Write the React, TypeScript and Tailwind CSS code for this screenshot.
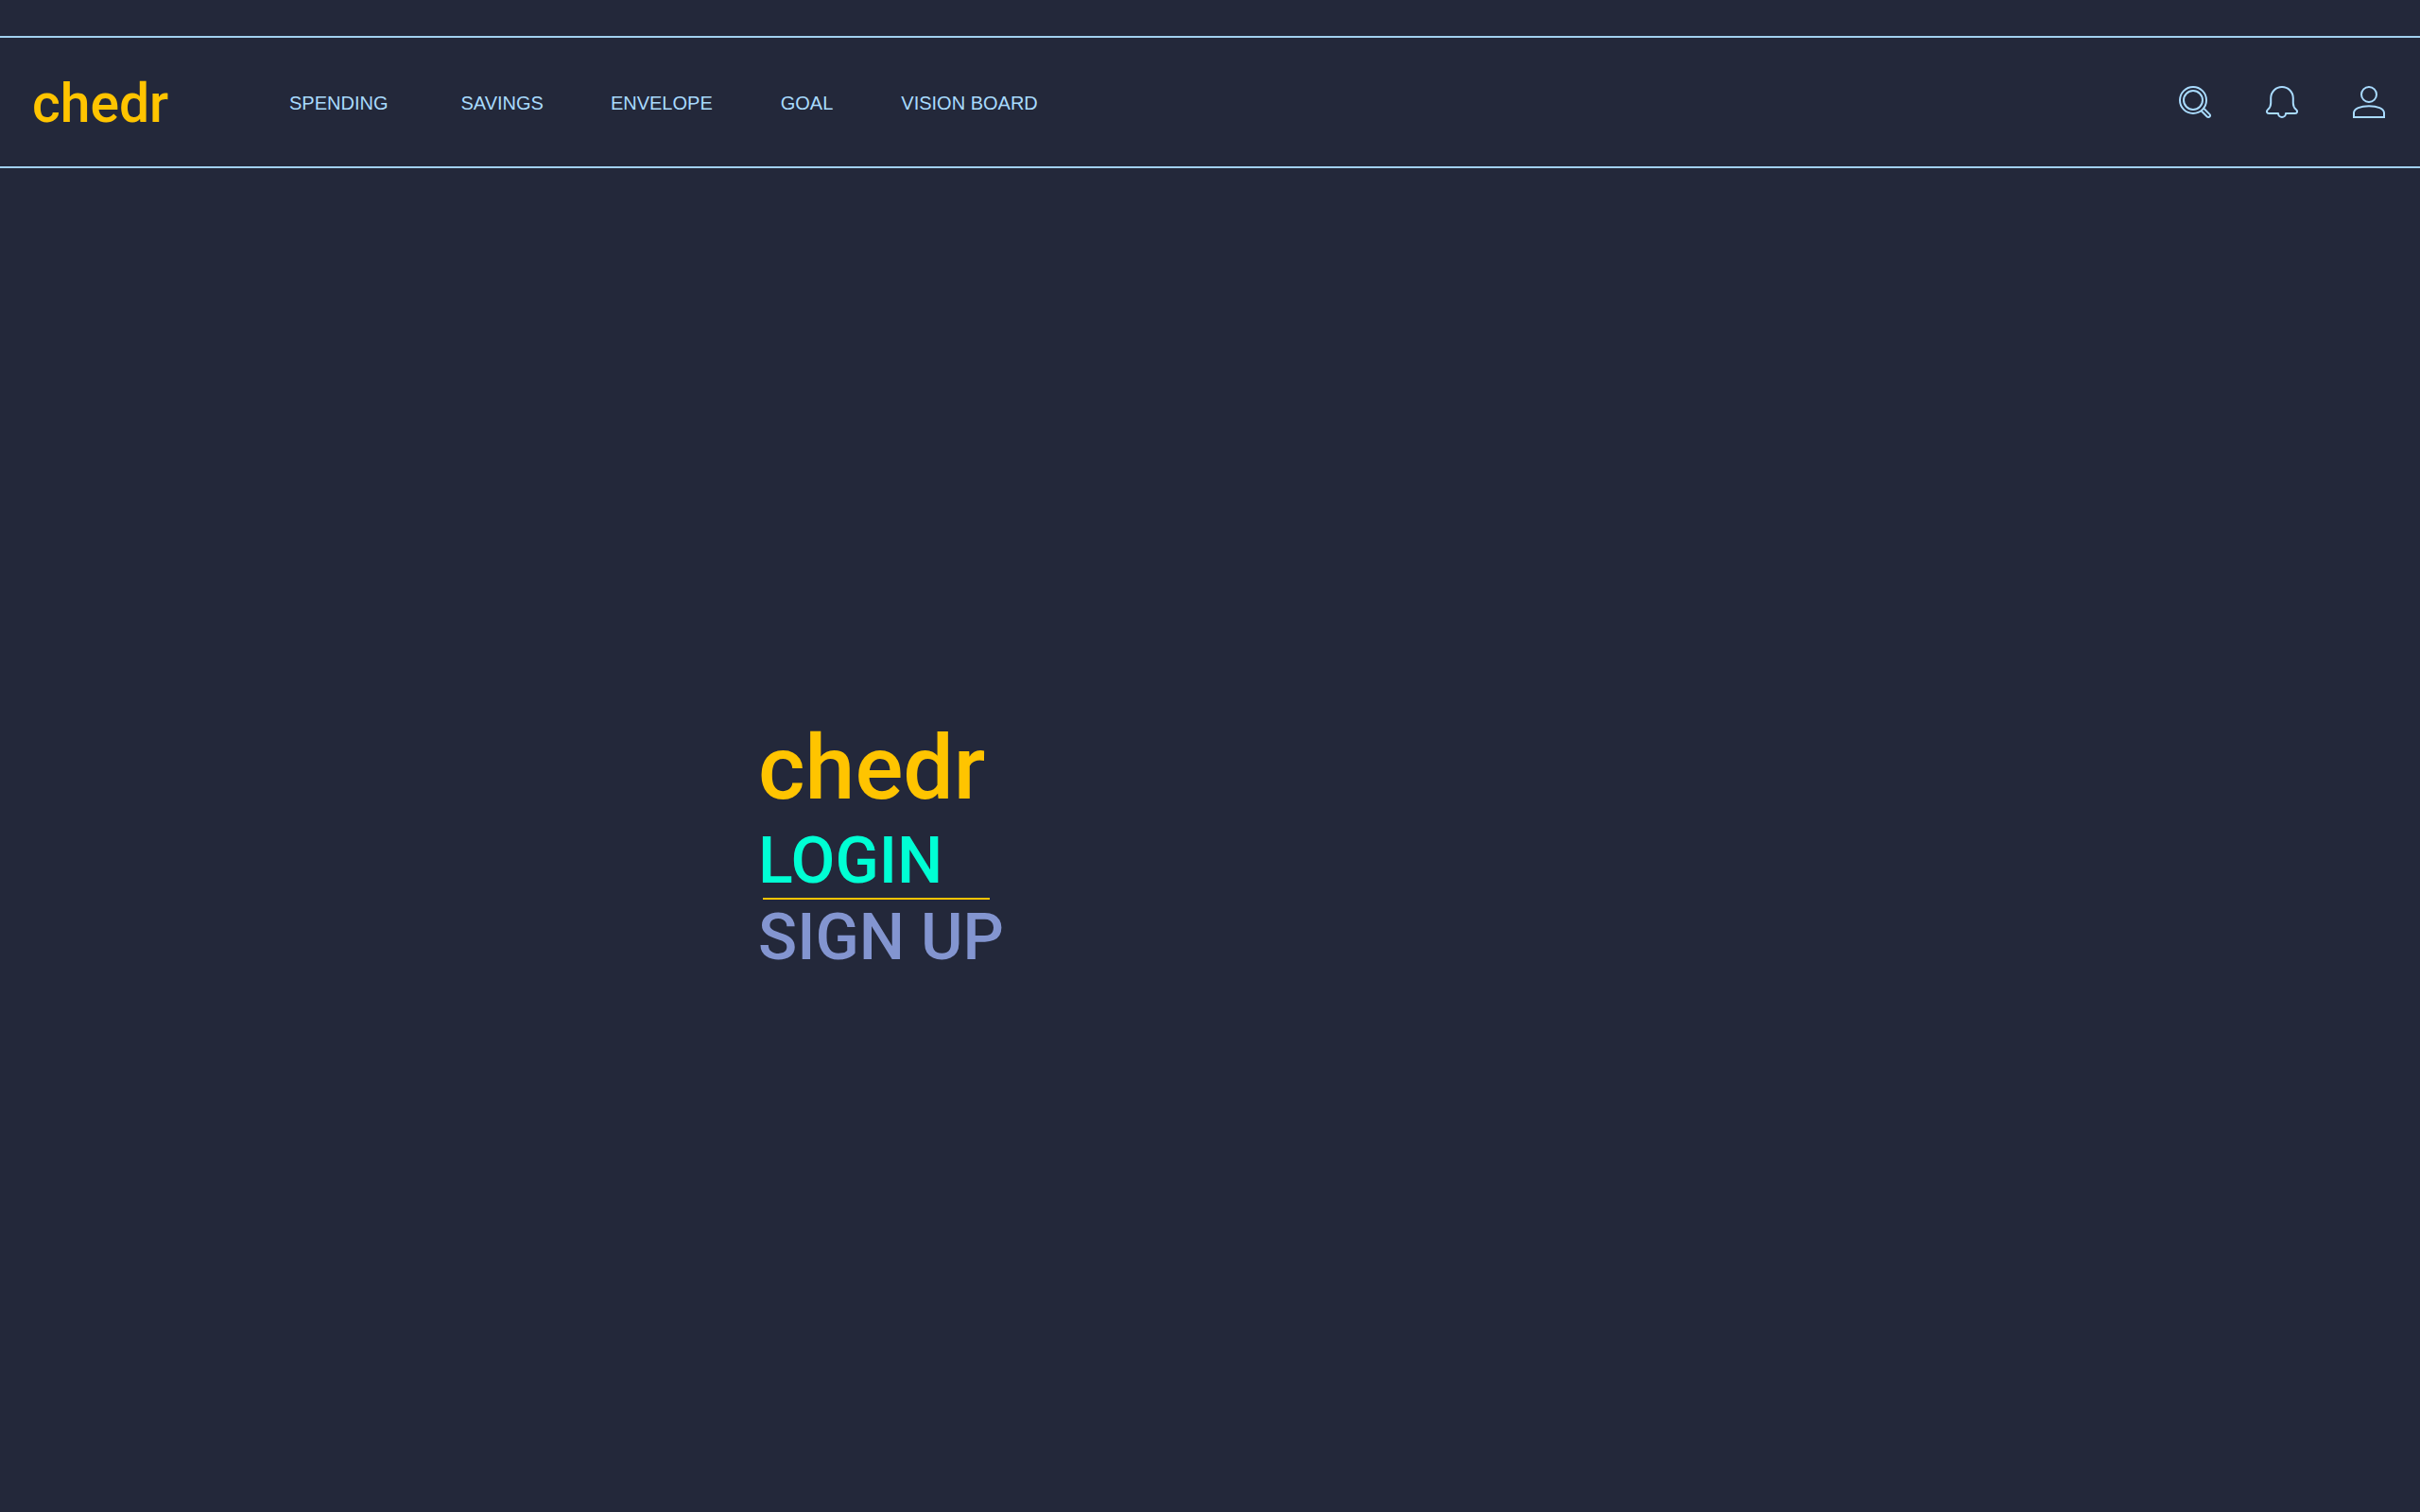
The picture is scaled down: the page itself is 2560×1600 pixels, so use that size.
import type { ReactNode } from "react";

const navItems = [
  { label: "SPENDING", spacing: "mr-[77px]" },
  { label: "SAVINGS", spacing: "mr-[71px]" },
  { label: "ENVELOPE", spacing: "mr-[72px]" },
  { label: "GOAL", spacing: "mr-[72px]" },
  { label: "VISION BOARD", spacing: "" },
];

function IconButton({ label, children }: { label: string; children: ReactNode }) {
  return (
    <button type="button" aria-label={label} className="size-9 cursor-pointer">
      <svg viewBox="0 0 36 36" className="size-9" fill="none" stroke="currentColor" strokeWidth="2">
        {children}
      </svg>
    </button>
  );
}

export default function App() {
  return (
    <div className="min-h-screen bg-[#23283a] pt-[38px] font-['Liberation_Sans',Arial,sans-serif]">
      <header className="flex h-[140px] items-center border-y-2 border-[#a1d0ef] pr-9 pl-[34px] text-[#a9dbfe]">
        <a
          href="#"
          className="w-[272px] shrink-0 pt-1 font-['Roboto',sans-serif] text-[57px] leading-[68px] font-medium text-[#ffc400]"
        >
          chedr
        </a>
        <nav className="flex items-center pt-0.5 text-xl whitespace-nowrap">
          {navItems.map((item) => (
            <a key={item.label} href="#" className={item.spacing}>
              {item.label}
            </a>
          ))}
        </nav>
        <div className="ml-auto flex gap-14">
          <IconButton label="Search">
            <circle cx="16" cy="16" r="14" />
            <circle cx="16" cy="16" r="10" />
            <path d="M27 24.500l6.400 6.400a1.800 1.800 0 0 1-2.600 2.600L24.400 27" />
          </IconButton>
          <IconButton label="Notifications">
            <path
              d="M14 30H4.200c-2.600 0-3-2.600-1.200-4 2-1.600 3.200-3.600 3.200-7v-5.200a11.800 11.800 0 0 1 23.600 0V19c0 3.400 1.200 5.400 3.200 7 1.800 1.400 1.400 4-1.200 4H22c0 2.400-1.800 4-4 4s-4-1.600-4-4z"
              strokeLinejoin="round"
            />
          </IconButton>
          <IconButton label="Account">
            <circle cx="18" cy="10" r="8" />
            <path d="M2 34v-4.500C2 25 9 22.200 18 22.200S34 25 34 29.500V34z" />
          </IconButton>
        </div>
      </header>

      <main className="flex flex-col items-start pt-[575px] pl-[802px] font-['Roboto',sans-serif] font-medium">
        <h1 className="text-[95px] leading-[120px] text-[#ffc400]">chedr</h1>
        <button type="button" className="cursor-pointer text-[68px] leading-[76px] text-[#00ffd4]">
          LOGIN
        </button>
        <hr className="mt-px ml-[5px] w-60 border-t-2 border-[#ffc400]" />
        <button type="button" className="cursor-pointer text-[68px] leading-[80px] text-[#8395d0]">
          SIGN UP
        </button>
      </main>
    </div>
  );
}
